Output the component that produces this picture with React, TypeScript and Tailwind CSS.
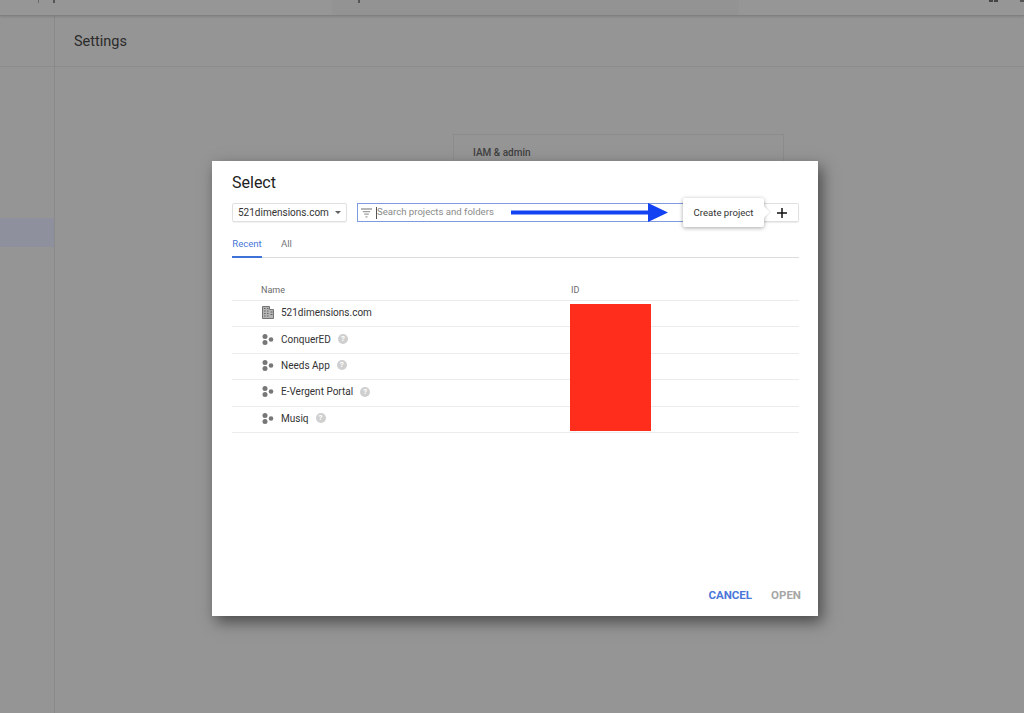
const font = { sans: "font-['Roboto','Liberation_Sans',sans-serif]" };

const rows = [
  { name: "521dimensions.com", org: true },
  { name: "ConquerED" },
  { name: "Needs App" },
  { name: "E-Vergent Portal" },
  { name: "Musiq" },
];

const BuildingIcon = () => (
  <svg width="12" height="13" viewBox="0 0 12 13" fill="none" stroke="#757575" strokeWidth="1">
    <path d="M0.5 12.5V0.5H7.5V3.5H11.5V12.5Z" fill="#b5b5b5" />
    <path d="M2 2.5H3.5M5 2.5H6.5M2 5H3.5M5 5H6.5M2 7.5H3.5M5 7.5H6.5M2 10H3.5M5 10H6.5M8.5 6H10.5M8.5 8.5H10.5" stroke="#666" />
  </svg>
);

const ProjectIcon = () => (
  <svg width="12" height="11" viewBox="0 0 12 11" fill="#777777">
    <circle cx="3" cy="2.5" r="2.5" />
    <circle cx="3" cy="8.5" r="2.5" />
    <circle cx="9" cy="5.5" r="2.3" />
  </svg>
);

const HelpIcon = () => (
  <span className="flex h-[10px] w-[10px] items-center justify-center rounded-full bg-[#cfcfcf] text-[8px] font-bold leading-none text-white">
    ?
  </span>
);

const FilterIcon = () => (
  <svg width="11" height="10" viewBox="0 0 11 10" fill="none" stroke="#a0a0a0" strokeWidth="1.3">
    <path d="M0 1H11M1.8 3.6H9.2M3.2 6.2H7.8M4.5 8.8H6.5" />
  </svg>
);

export default function App() {
  return (
    <div className={`relative flex h-[713px] w-[1024px] flex-col overflow-hidden bg-[#959595] ${font.sans}`}>
      <div className="relative h-[16px] shrink-0 border-b border-[#808080] bg-[#969696] shadow-[0_1px_2px_rgba(0,0,0,0.12)]">
        <div className="absolute left-[332px] top-0 h-[15px] w-[407px] bg-[#939393]" />
        <span className="absolute left-[38px] top-0 h-[3px] w-[1px] bg-[#6a6a6a]" />
        <span className="absolute left-[53px] top-0 h-[3px] w-[2px] bg-[#555]" />
        <span className="absolute left-[358px] top-0 h-[3px] w-[2px] bg-[#555]" />
        <span className="absolute left-[989px] top-0 h-[2px] w-[4px] bg-[#444]" />
        <span className="absolute left-[994px] top-0 h-[2px] w-[4px] bg-[#444]" />
        <span className="absolute left-[1020px] top-0 h-[2px] w-[4px] bg-[#555]" />
      </div>
      <div className="flex flex-1">
        <aside className="w-[55px] shrink-0 border-r border-[#8a8a8a]">
          <div className="h-[51px] border-b border-[#8c8c8c]" />
          <div className="mt-[151px] h-[29px] bg-[#8e909e]" />
        </aside>
        <main className="flex-1">
          <div className="flex h-[51px] items-center border-b border-[#8c8c8c] pl-[19px] pt-[2px] text-[14.5px] text-[#2b2b2b]">
            Settings
          </div>
          <div className="ml-[398px] mt-[67px] h-[120px] w-[331px] border border-[#8c8c8c] pl-[19px] pt-[10px] text-[10px] font-medium text-[#404040]">
            IAM &amp; admin
          </div>
        </main>
      </div>

      {/* dialog */}
      <div className="absolute left-[212px] top-[161px] flex h-[455px] w-[606px] flex-col bg-white px-[20px] text-[#212121] shadow-[4px_6px_14px_rgba(0,0,0,0.5)]">
        <h1 className="mt-[12px] text-[16px] leading-[20px]">Select</h1>

        <div className="mt-[10px] flex h-[19px] w-[567px] items-stretch">
          <div className="flex w-[115px] items-center justify-between rounded-[2px] border border-[#e0e0e0] pl-[5px] pr-[5px] text-[10px] text-[#333] shadow-[0_1px_1px_rgba(0,0,0,0.06)]">
            521dimensions.com
            <span className="h-0 w-0 border-x-[3px] border-t-[3px] border-x-transparent border-t-[#616161]" />
          </div>
          <div className="ml-[10px] flex flex-1 items-center border border-[#7f9be0] pl-[3px] text-[9.6px] text-[#8a8a8a]">
            <FilterIcon />
            <span className="ml-[4px] h-[12px] w-px bg-[#555]" />
            Search projects and folders
          </div>
          <div className="flex w-[35px] items-center justify-end rounded-r-[2px] border border-l-0 border-[#e0e0e0] pr-[11px] shadow-[0_1px_1px_rgba(0,0,0,0.08)]">
            <svg width="10" height="10" viewBox="0 0 10 10" stroke="#111" strokeWidth="1.5">
              <path d="M5 0V10M0 5H10" />
            </svg>
          </div>
        </div>

        <div className="mt-[14px] flex h-[22px] w-[567px] items-start gap-[19px] border-b border-[#dcdcdc] text-[9.6px]">
          <span className="h-[22px] w-[30px] border-b-2 border-[#3f72d8] pt-[1px] text-center text-[#4a78d8]">Recent</span>
          <span className="pt-[1px] text-[#757575]">All</span>
        </div>

        <div className="relative mt-[23px] w-[567px]">
          <div className="flex h-[19px] items-center text-[9px] text-[#6b6b6b]">
            <span className="ml-[29px] w-[310px]">Name</span>
            <span>ID</span>
          </div>
          {rows.map((row) => (
            <div key={row.name} className="flex h-[26.4px] items-center border-t border-[#ececec] pb-[2px] text-[10px] text-[#333]">
              <span className="ml-[30px] flex w-[19px]">{row.org ? <BuildingIcon /> : <ProjectIcon />}</span>
              <span>{row.name}</span>
              {!row.org && <span className="ml-[7px]"><HelpIcon /></span>}
            </div>
          ))}
          <div className="h-px bg-[#ececec]" />
          <div className="absolute left-[338px] top-[23px] h-[127px] w-[81px] bg-[#ff2d1c]" />
        </div>

        <div className="mt-auto mb-[14px] flex w-[569px] justify-end gap-[19px] text-[11.5px] font-bold leading-[13px]">
          <span className="text-[#4a78d8]">CANCEL</span>
          <span className="text-[#a6a6a6]">OPEN</span>
        </div>
      </div>

      {/* blue annotation arrow */}
      <svg className="absolute left-[511px] top-[203px]" width="157" height="20" viewBox="0 0 157 20" fill="#1242f2">
        <path d="M0 7.5H137V0L157 9.5L137 19V11.5H0Z" />
      </svg>

      {/* tooltip */}
      <div className="absolute left-[683px] top-[198px] flex h-[29px] w-[81px] items-center justify-center rounded-[2px] bg-white pt-[1px] text-[9.6px] text-[#333] shadow-[0_1px_4px_rgba(0,0,0,0.35)]">
        Create project
        <span className="absolute -right-[4px] top-[10px] h-[8px] w-[8px] rotate-45 bg-white shadow-[1px_-1px_1px_rgba(0,0,0,0.08)]" />
      </div>
    </div>
  );
}
